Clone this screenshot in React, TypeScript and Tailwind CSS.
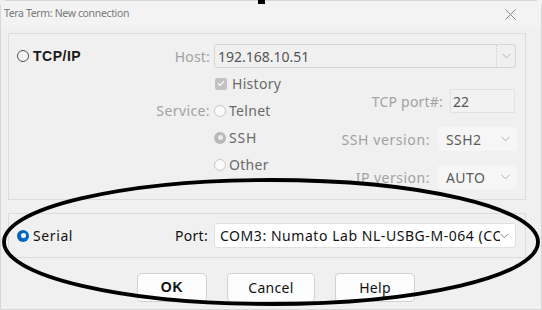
import React from "react";

type RadioKind = "off" | "offDisabled" | "onDisabled" | "on";

function Radio({ kind }: { kind: RadioKind }) {
  if (kind === "on") {
    return (
      <span className="flex h-[12px] w-[12px] items-center justify-center rounded-full bg-[#0067c0]">
        <span className="h-[5px] w-[5px] rounded-full bg-white" />
      </span>
    );
  }
  if (kind === "onDisabled") {
    return (
      <span className="flex h-[12px] w-[12px] items-center justify-center rounded-full bg-[#b9b9b9]">
        <span className="h-[5px] w-[5px] rounded-full bg-[#ececec]" />
      </span>
    );
  }
  if (kind === "offDisabled") {
    return <span className="h-[12px] w-[12px] rounded-full border border-[#c8c8c8] bg-[#fafafa]" />;
  }
  return <span className="h-[12px] w-[12px] rounded-full border border-[#505050] bg-[#f4f4f4]" />;
}

function Chevron({ color = "#b0b0b0" }: { color?: string }) {
  return (
    <svg width="9" height="6" viewBox="0 0 9 6" fill="none">
      <polyline points="0.5,0.8 4.5,4.8 8.5,0.8" stroke={color} strokeWidth="1" />
    </svg>
  );
}

function Select({ value, width }: { value: string; width: string }) {
  return (
    <div className={`flex h-[24px] ${width} items-center justify-between rounded-[3px] bg-[#f6f6f6] pl-[8px] pr-[7px]`}>
      <span className="text-[14px] tracking-[0.4px] text-[#5a5a5a]">{value}</span>
      <Chevron />
    </div>
  );
}

export default function App() {
  return (
    <div className="relative h-[310px] w-[542px] overflow-hidden bg-[#f0f0f0] font-['Noto_Sans',sans-serif]">
      <div className="flex h-full flex-col rounded-t-[7px] border border-[#d6d6d6] bg-[#f0f0f0]">
        {/* title bar */}
        <div className="flex h-[26px] items-center justify-between bg-[#f3f3f3] pl-[3px] pr-[25px]">
          <span className="text-[10.5px] tracking-[-0.35px] text-[#7a7a7a]">Tera Term: New connection</span>
          <svg width="11" height="11" viewBox="0 0 11 11">
            <path d="M0.5 0.5 L10.5 10.5 M10.5 0.5 L0.5 10.5" stroke="#8a8a8a" strokeWidth="1" />
          </svg>
        </div>

        {/* TCP/IP group */}
        <div className="ml-[7px] mt-[6px] h-[167px] w-[518px] border border-[#dcdcdc]">
          <div className="mt-[10px] flex h-[24px] items-center">
            <div className="flex w-[205px] items-center justify-between pl-[8px] pr-[4px]">
              <div className="flex items-center gap-[4px]">
                <Radio kind="off" />
                <span className="font-['Liberation_Sans',sans-serif] text-[14px] font-bold tracking-[0.5px] text-[#1a1a1a]">TCP/IP</span>
              </div>
              <span className="text-[14px] tracking-[0.2px] text-[#a2a2a2]">Host:</span>
            </div>
            <div className="flex h-[24px] w-[302px] items-stretch rounded-[3px] border border-[#d6d6d6] bg-[#f0f0f0]">
              <div className="flex flex-1 items-center border-r border-dotted border-[#d0d0d0] pl-[3px] text-[14px] text-[#555]">
                192.168.10.51
              </div>
              <div className="flex w-[18px] items-center justify-center">
                <Chevron />
              </div>
            </div>
          </div>

          <div className="mt-[2px] flex">
            <div className="flex w-[205px] flex-col pr-[4px]">
              <div className="h-[27px]" />
              <div className="flex h-[27px] items-center justify-end text-[14px] tracking-[0.4px] text-[#a2a2a2]">Service:</div>
            </div>
            <div className="flex w-[120px] flex-col">
              <div className="flex h-[27px] items-center gap-[5px] pl-[1px]">
                <span className="flex h-[12px] w-[12px] items-center justify-center rounded-[2px] bg-[#c2c2c2]">
                  <svg width="8" height="7" viewBox="0 0 8 7">
                    <polyline points="1,3.5 3,5.5 7,1.2" fill="none" stroke="#fff" strokeWidth="1.2" />
                  </svg>
                </span>
                <span className="text-[14px] tracking-[0.3px] text-[#6a6a6a]">History</span>
              </div>
              <div className="flex h-[27px] items-center gap-[3px]">
                <Radio kind="offDisabled" />
                <span className="text-[14px] tracking-[0.3px] text-[#6a6a6a]">Telnet</span>
              </div>
              <div className="flex h-[27px] items-center gap-[3px]">
                <Radio kind="onDisabled" />
                <span className="text-[14px] tracking-[0.8px] text-[#6a6a6a]">SSH</span>
              </div>
              <div className="flex h-[27px] items-center gap-[3px]">
                <Radio kind="offDisabled" />
                <span className="text-[14px] tracking-[0.3px] text-[#6a6a6a]">Other</span>
              </div>
            </div>
            <div className="flex flex-1 flex-col items-end pr-[8px] pt-[19px]">
              <div className="flex items-center gap-[7px] pr-[2px]">
                <span className="text-[14px] tracking-[0.2px] text-[#a2a2a2]">TCP port#:</span>
                <div className="flex h-[24px] w-[65px] items-center border border-[#e2e2e2] bg-[#f2f2f2] pl-[2px] text-[14px] text-[#555]">
                  22
                </div>
              </div>
              <div className="mt-[14px] flex items-center gap-[8px]">
                <span className="text-[14px] tracking-[0.6px] text-[#a2a2a2]">SSH version:</span>
                <Select value="SSH2" width="w-[79px]" />
              </div>
              <div className="mt-[14px] flex items-center gap-[8px]">
                <span className="text-[14px] tracking-[0.5px] text-[#a2a2a2]">IP version:</span>
                <Select value="AUTO" width="w-[79px]" />
              </div>
            </div>
          </div>
        </div>

        {/* Serial group */}
        <div className="ml-[7px] mt-[13px] flex h-[45px] w-[518px] items-center border border-[#dcdcdc]">
          <div className="flex w-[205px] items-center justify-between pl-[8px] pr-[6px]">
            <div className="flex items-center gap-[4px]">
              <Radio kind="on" />
              <span className="text-[14px] tracking-[0.6px] text-[#111]">Serial</span>
            </div>
            <span className="text-[14px] tracking-[0.3px] text-[#111]">Port:</span>
          </div>
          <div className="flex h-[25px] w-[302px] items-center justify-between rounded-[3px] border border-[#e0e0e0] bg-white pl-[5px] pr-[6px]">
            <span className="w-[283px] overflow-hidden whitespace-nowrap text-[14px] tracking-[0.55px] text-[#111]">
              COM3: Numato Lab NL-USBG-M-064 (COM3)
            </span>
            <Chevron color="#8a8a8a" />
          </div>
        </div>

        {/* buttons */}
        <div className="mt-[15px] flex gap-[20px] pl-[136px]">
          <button className="h-[29px] w-[70px] rounded-[4px] border border-[#d2d2d2] bg-[#fdfdfd] font-['Liberation_Sans',sans-serif] text-[14px] font-semibold tracking-[0.8px] text-[#111]">
            OK
          </button>
          <button className="h-[29px] w-[88px] rounded-[4px] border border-[#d2d2d2] bg-[#fdfdfd] text-[14px] tracking-[0.3px] text-[#111]">
            Cancel
          </button>
          <button className="h-[29px] w-[80px] rounded-[4px] border border-[#d2d2d2] bg-[#fdfdfd] text-[14px] tracking-[0.3px] text-[#111]">
            Help
          </button>
        </div>
      </div>

      {/* hand-drawn highlight */}
      <svg className="pointer-events-none absolute inset-0" width="542" height="310" viewBox="0 0 542 310">
        <ellipse cx="271" cy="242" rx="267" ry="62" fill="none" stroke="#000" strokeWidth="3.8" />
      </svg>
      <div className="absolute left-[258px] top-0 h-[4px] w-[7px] bg-black" />
    </div>
  );
}
